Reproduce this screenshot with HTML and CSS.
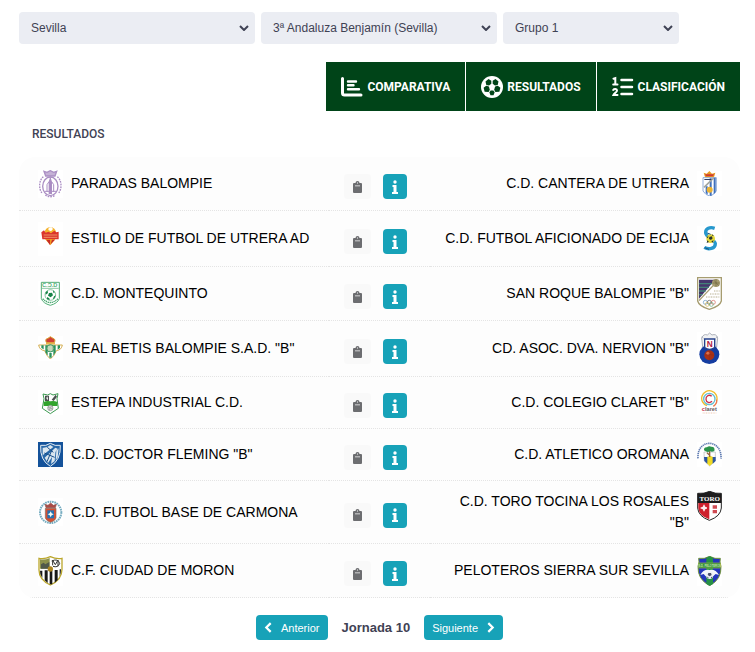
FILE: index.html
```html
<!DOCTYPE html>
<html lang="es">
<head>
<meta charset="utf-8">
<meta name="viewport" content="width=device-width, initial-scale=1">
<title>Resultados</title>
<link rel="stylesheet" href="styles.css">
</head>
<body>
<svg class="defs" aria-hidden="true">
  <symbol id="chevron" viewBox="0 0 10 6"><path d="M1 1l4 4 4-4" fill="none" stroke="currentColor" stroke-width="2"/></symbol>
  <symbol id="clip" viewBox="0 0 9 12"><path fill="currentColor" fill-rule="evenodd" d="M1 2h1.500a2 2 0 0 1 4 0H8a1 1 0 0 1 1 1v8a1 1 0 0 1-1 1H1a1 1 0 0 1-1-1V3a1 1 0 0 1 1-1zM4 1.500v1h1v-1zM2 4.500v.8h5v-.8z"/></symbol>
  <symbol id="info" viewBox="0 0 6 14"><circle cx="3" cy="2" r="1.700" fill="currentColor"/><path fill="currentColor" d="M.5 5h4v7H6v2H0v-2h1.500V7h-1z"/></symbol>
</svg>

<form class="filters">
  <div class="field"><select aria-label="Provincia"><option>Sevilla</option></select><svg><use href="#chevron"/></svg></div>
  <div class="field"><select aria-label="Competición"><option>3ª Andaluza Benjamín (Sevilla)</option></select><svg><use href="#chevron"/></svg></div>
  <div class="field"><select aria-label="Grupo"><option>Grupo 1</option></select><svg><use href="#chevron"/></svg></div>
</form>

<nav class="tabs">
  <a href="#comparativa">
    <svg viewBox="0 0 22 20" fill="none" stroke="#fff" stroke-linecap="round"><path stroke-width="3" d="M1.500 1.500V16a2 2 0 0 0 2 2H20"/><path stroke-width="2.400" d="M7 4.500h8M7 8.300h5.500M7 12.300h11"/></svg>
    Comparativa</a>
  <a href="#resultados">
    <svg viewBox="0 0 22 22"><circle cx="11" cy="11" r="11" fill="#fff"/><g fill="#004418"><path d="M10.300 4.800L7.500 3 4.500 5.500l.8 3.500 2.700.6 2.300-1.800z"/><path d="M11.700 4.800L14.500 3l3 2.500-.8 3.500-2.700.6-2.300-1.800z"/><path d="M5.200 9.800L2.600 11.700l1 4 4 .3 1.200-2.200-.9-3.300z"/><path d="M16.800 9.800l2.600 1.900-1 4-4 .3-1.200-2.200.9-3.300z"/><path d="M8.300 16.300l1.400-1.800h2.600l1.400 1.800-1.200 3H9.500z"/></g></svg>
    Resultados</a>
  <a href="#clasificacion">
    <svg viewBox="0 0 22 20" fill="none" stroke="#fff" stroke-linecap="round"><path stroke-width="2.500" d="M9.500 3H20M9.500 10H20M9.500 17H20"/><path stroke-width="2" d="M1.500 1.800L3.300 1.200V7M1.200 7.500h4.300M1.200 13c1-1.500 3.800-1.200 3.800.5 0 1.700-2.500 2.500-3.500 4.500h4"/></svg>
    Clasificación</a>
</nav>

<main>
<h1>Resultados</h1>
<table class="matches">
<colgroup><col class="side"><col class="mid"><col class="side"></colgroup>
<tbody>
<tr>
  <td><div class="team"><svg class="crest h28" viewBox="0 0 75 84"><g fill="none" stroke="#ab8fc4" stroke-width="4"><path fill="#c5b1d6" d="M18 4l9 3 10-5 10 5 9-3-5 14H23z"/><ellipse cx="37" cy="49" rx="23" ry="28"/><path stroke-dasharray="5 3" d="M16 20C2 32 2 57 12 69M58 20c14 12 14 37 4 49M22 75c8 7 22 7 30 0"/><path fill="#a98bc2" d="M34 36l3-10 3 10v34h-6z"/><path stroke-width="3" d="M27 66V44l6-9M47 66V44l-6-9M20 64h34"/></g></svg><span>PARADAS BALOMPIE</span></div></td>
  <td class="actions"><button class="note" aria-label="Acta"><svg><use href="#clip"/></svg></button><button class="info" aria-label="Información"><svg><use href="#info"/></svg></button></td>
  <td><div class="team away"><span>C.D. CANTERA DE UTRERA</span><svg class="crest" viewBox="0 0 75 75"><path fill="#e99a25" d="M20 5l9 3 8-8 8 8 10-3-4 14H24z"/><path fill="#cf3b31" d="M24 10h27l-3 6H27z"/><path d="M18 20h40v40q-8 13-20 15-12-2-20-15z" fill="#fff" stroke="#5a86c9" stroke-width="2"/><path fill="#3f70bd" d="M26 46h6v25l-6-5zM38 22h6v52h-6zM50 20h6v44l-6 6z"/><path stroke="#a3a6a1" stroke-width="5" d="M21 49l29-28"/><circle cx="38" cy="56" r="9" fill="#eab334"/><path fill="#303c64" d="M22 24h21v3H22z"/></svg></div></td>
</tr>
<tr class="tall">
  <td><div class="team"><svg class="crest h34" viewBox="0 0 75 102"><circle cx="37" cy="32" r="17" fill="#f5b32d"/><path fill="#fff" d="M32 17l8-2 5 6-6 7-8-4z"/><path fill="#db352b" d="M10 31l8-6 5 7 9-3 7 5 10-8 6 5 7-2v23H13z"/><path fill="#f39b22" d="M21 51h31L37 70z"/><path fill="#c62d27" d="M25 53l11 16V53zM42 53l-4 14 13-14z"/><path stroke="#f8c184" stroke-width="2" d="M17 39h41M17 46h41"/></svg><span>ESTILO DE FUTBOL DE UTRERA AD</span></div></td>
  <td class="actions"><button class="note" aria-label="Acta"><svg><use href="#clip"/></svg></button><button class="info" aria-label="Información"><svg><use href="#info"/></svg></button></td>
  <td><div class="team away"><span>C.D. FUTBOL AFICIONADO DE ECIJA</span><svg class="crest" viewBox="0 0 75 75"><path fill="none" stroke="#2798cd" stroke-width="10" d="M53 7C39 2 25 7 26 21c2 14 28 18 29 32 0 15-20 19-33 11"/><circle cx="41" cy="38" r="13" fill="#e5d83b"/><path fill="#26332e" d="M37 33l7-2 3 6-5 5-6-3zM29 34l5-4-1 7zM50 43l-3 7-4-4zM31 43l5 5-7 3zM44 25l6 3-3 3z"/><path stroke="#1d537e" stroke-width="3" d="M31 21l10 4M23 65l13 5"/></svg></div></td>
</tr>
<tr>
  <td><div class="team"><svg class="crest" viewBox="0 0 75 75"><path d="M10 4h54v49q-5 14-27 20-22-6-27-20z" fill="#fff" stroke="#51ae76" stroke-width="3"/><text x="12" y="19" class="green-letters">C.Ɔ.D</text><path stroke="#51ae76" stroke-width="2" d="M12 22h50"/><circle cx="37" cy="42" r="16" fill="#fff" stroke="#51ae76" stroke-width="2"/><path fill="#178448" d="M33 36l9-1 3 8-7 6-8-5zM23 33l6-4 1 7-7 5zM45 28l6 6-5 2zM48 46l5-3-3 9-6 3zM27 48l7 4 1 6-8-4z"/><path fill="none" stroke="#43a56b" stroke-width="4" stroke-dasharray="4 2" d="M14 53q23 23 46 0"/></svg><span>C.D. MONTEQUINTO</span></div></td>
  <td class="actions"><button class="note" aria-label="Acta"><svg><use href="#clip"/></svg></button><button class="info" aria-label="Información"><svg><use href="#info"/></svg></button></td>
  <td><div class="team away"><span>SAN ROQUE BALOMPIE "B"</span><svg class="crest h33" viewBox="0 0 75 99"><path d="M2 2h71v70q-4 16-36 25Q6 88 2 72z" fill="#fff" stroke="#a69c70" stroke-width="4"/><path fill="#46376d" d="M6 8h48L6 65z"/><path stroke="#438177" stroke-width="4" d="M6 20h40M6 31h30M6 42h20M6 53h10"/><path stroke="#a69c70" stroke-width="4" d="M6 71L52 22"/><circle cx="57" cy="18" r="12" fill="#a69c70"/><path fill="none" stroke="#726944" stroke-width="2" d="M47 18h20M57 7v21M50 9l15 17"/><path stroke="#b6ae8d" stroke-width="3" stroke-dasharray="3 2" d="M51 42h17M39 51h29M27 60h41"/><g fill="none" stroke-width="2"><circle cx="25" cy="76" r="6" stroke="#5c92bd"/><circle cx="37" cy="76" r="6" stroke="#555"/><circle cx="49" cy="76" r="6" stroke="#d66456"/><circle cx="31" cy="82" r="6" stroke="#d9b84e"/><circle cx="43" cy="82" r="6" stroke="#62a777"/></g></svg></div></td>
</tr>
<tr class="tall">
  <td><div class="team"><svg class="crest" viewBox="0 0 75 75"><path fill="#cf4035" stroke="#dba332" stroke-width="3" d="M26 21q-7-12 4-14l7-5 8 5q10 3 3 14z"/><path fill="#e4b44b" d="M24 19h27v6H24z"/><path d="M2 27h71q-2 15-18 17Q50 59 37 69 25 59 20 44 4 42 2 27z" fill="#fff" stroke="#d4ae52" stroke-width="3"/><path fill="#28915a" d="M10 28h7v12l-7-4zM22 28h7v31l-7-11zM46 28h7v20l-7 11zM59 28h7v8l-7 5zM34 51h7v14h-7z"/><circle cx="37" cy="37" r="11" fill="#a9c49c" stroke="#3c9b67" stroke-width="3"/><path stroke="#dfeedd" stroke-width="3" d="M33 30v14M39 29v16"/></svg><span>REAL BETIS BALOMPIE S.A.D. "B"</span></div></td>
  <td class="actions"><button class="note" aria-label="Acta"><svg><use href="#clip"/></svg></button><button class="info" aria-label="Información"><svg><use href="#info"/></svg></button></td>
  <td><div class="team away"><span>CD. ASOC. DVA. NERVION "B"</span><svg class="crest h34" viewBox="0 0 75 102"><path d="M14 18q6-14 17-9l7-6 7 6q13-5 17 9l-3 27H17z" fill="#f1f2f4" stroke="#aeb2bb" stroke-width="3"/><path fill="none" stroke="#a2a8b5" stroke-width="3" stroke-dasharray="5 3" d="M14 15q12 3 9 25M61 15q-10 3-8 25"/><ellipse cx="37" cy="67" rx="30" ry="29" fill="#153da1"/><path d="M23 21h30v26q-15 10-30 0z" fill="#fff" stroke="#26428c" stroke-width="4"/><text x="38" y="45" text-anchor="middle" class="n-letter">N</text><circle cx="37" cy="70" r="15" fill="#a83217"/><circle cx="33" cy="64" r="5" fill="#db7450"/><path fill="none" stroke="#8a2816" stroke-width="1" d="M23 70q14-7 28 0M37 55v29"/></svg></div></td>
</tr>
<tr class="compact">
  <td><div class="team"><svg class="crest" viewBox="0 0 75 75"><path d="M15 12l14 3 8-4 8 4 15-4-3 15 4 29-24 16-24-16 5-29z" fill="#fff" stroke="#3c9a51" stroke-width="3"/><path fill="#4b5050" d="M21 17h12v16H21zM41 29l12-15 4 6-10 13z"/><path fill="#fff" d="M25 24l3-5 2 7-2 5z"/><path fill="#32a52d" d="M17 36q9-5 20-2 11-3 21 2v12H17z"/><circle cx="37" cy="54" r="8" fill="#d3d8d5" stroke="#8a908c" stroke-width="2"/><path stroke="#999" stroke-width="2" d="M30 51l14 6M41 47l-8 14"/></svg><span>ESTEPA INDUSTRIAL C.D.</span></div></td>
  <td class="actions"><button class="note" aria-label="Acta"><svg><use href="#clip"/></svg></button><button class="info" aria-label="Información"><svg><use href="#info"/></svg></button></td>
  <td><div class="team away"><span>C.D. COLEGIO CLARET "B"</span><svg class="crest" viewBox="0 0 75 75"><g fill="none" stroke-width="4"><path stroke="#f1bd2c" d="M30 47A23 23 0 1 1 59 32"/><path stroke="#ed7748" d="M59 29q2 12-10 20"/><circle cx="37" cy="27" r="17" stroke="#63bed2"/><path stroke="#cc304b" d="M44 19c-8-8-18 0-17 9 1 10 11 13 18 6"/></g><text x="37" y="63" text-anchor="middle" class="claret"><tspan fill="#c72b45">c</tspan>laret</text><path stroke="#e5ad8e" stroke-width="2" stroke-dasharray="3 2" d="M17 69h41"/></svg></div></td>
</tr>
<tr class="compact">
  <td><div class="team"><svg class="crest" viewBox="0 0 75 75"><path fill="#14529a" d="M0 0h75v75H0z"/><path d="M8 10q16 3 29-6 14 9 30 6Q69 55 37 73 5 55 8 10z" fill="#2767a8" stroke="#e6edf3" stroke-width="3"/><path fill="#dbe6ef" d="M14 17q14 1 23-8l9 6-32 25zM20 47l32-30 7 3-29 43zM39 66l6-37 8-6-3 34zM55 27l7-8-3 27-6 8z"/><path stroke="#164d89" stroke-width="3" d="M19 33l31 13M28 16l18 15M27 59l15-36"/></svg><span>C.D. DOCTOR FLEMING "B"</span></div></td>
  <td class="actions"><button class="note" aria-label="Acta"><svg><use href="#clip"/></svg></button><button class="info" aria-label="Información"><svg><use href="#info"/></svg></button></td>
  <td><div class="team away"><span>C.D. ATLETICO OROMANA</span><svg class="crest" viewBox="0 0 75 75"><path fill="none" stroke="#5d79b0" stroke-width="5" stroke-dasharray="4 2" d="M3 49C1 21 17 4 37 4s37 18 35 46"/><path fill="#fff" stroke="#b3b8b8" stroke-width="2" d="M21 30h34v27L38 72 22 57z"/><path fill="#f0da26" d="M30 45l9-4 9 4v18L38 72l-8-8z"/><path fill="#2c55a0" d="M21 45h10v20l-9-8zM47 45h9v12l-9 8z"/><path stroke="#92643c" stroke-width="4" d="M38 45V27M38 40l-8-8"/><path fill="#2c944b" d="M21 25q-1-10 9-9 5-5 13-2 12 0 9 13-8 4-13 0-6 7-18-2z"/></svg></div></td>
</tr>
<tr class="double">
  <td><div class="team"><svg class="crest h28" viewBox="0 0 75 84"><circle cx="38" cy="43" r="32" fill="none" stroke="#77adc1" stroke-width="6" stroke-dasharray="5 2"/><circle cx="38" cy="43" r="26" fill="#fff"/><path fill="#ad4b46" stroke="#8c5650" stroke-width="2" d="M24 29l-3-10 9 3 8-7 8 7 9-3-3 10z"/><path d="M22 31h32v29q-3 9-16 13-13-4-16-13z" fill="#d65032" stroke="#806e62" stroke-width="2"/><path fill="#2672b1" d="M28 37h20v24H28z"/><path fill="#f7f8ef" d="M38 40l3 6 6 3-6 3-3 6-3-6-6-3 6-3z"/></svg><span>C.D. FUTBOL BASE DE CARMONA</span></div></td>
  <td class="actions"><button class="note" aria-label="Acta"><svg><use href="#clip"/></svg></button><button class="info" aria-label="Información"><svg><use href="#info"/></svg></button></td>
  <td><div class="team away top"><span>C.D. TORO TOCINA LOS ROSALES "B"</span><svg class="crest h30" viewBox="0 0 75 90"><path fill="#fff" stroke="#252525" stroke-width="3" d="M2 7q20 2 36-6 16 8 35 6v44q-2 25-36 37Q4 76 2 51z"/><path fill="#ce202d" d="M4 35h33v50Q6 74 4 51z"/><path fill="#1d1c1d" d="M2 7q20 2 36-6 16 8 35 6v29H2z"/><text x="38" y="30" text-anchor="middle" class="toro">TORO</text><path stroke="#fff" stroke-width="4" d="M11 51h19M21 41v20"/><circle cx="21" cy="51" r="5" fill="none" stroke="#fff" stroke-width="2"/><path fill="#cf4b53" d="M47 43h13v10H47zM47 57h13v10H47z"/></svg></div></td>
</tr>
<tr>
  <td><div class="team"><svg class="crest h30" viewBox="0 0 75 90"><path d="M3 7q17 3 34-5 18 8 35 5v31q1 33-35 49Q1 71 3 38z" fill="#fff" stroke="#bba72d" stroke-width="4"/><path fill="#8c914c" d="M6 10q16 2 29-4v32H6z"/><path fill="#50594b" d="M9 25l8-5 5 5 12-7v20H9z"/><path fill="none" stroke="#333" stroke-width="3" d="M44 28V13l8 13 8-14v19M41 15q20-9 24 8-6 13-20 8"/><path fill="#181818" d="M6 44h7v22l-6-12zM20 43h9v38l-9-8zM35 43h8v42h-8zM50 42h9v30l-9 8zM65 40h4q0 14-4 21z"/><circle cx="37" cy="39" r="8" fill="#ad8623"/></svg><span>C.F. CIUDAD DE MORON</span></div></td>
  <td class="actions"><button class="note" aria-label="Acta"><svg><use href="#clip"/></svg></button><button class="info" aria-label="Información"><svg><use href="#info"/></svg></button></td>
  <td><div class="team away"><span>PELOTEROS SIERRA SUR SEVILLA</span><svg class="crest h30" viewBox="0 0 75 90"><path d="M5 7q17 3 33-6 16 9 32 6-3 10 2 24 2 39-34 58Q1 70 3 31 8 17 5 7z" fill="#2436bd" stroke="#73953b" stroke-width="3"/><path fill="#269145" d="M28 5l10-4 10 4v79l-10 5-10-5z"/><path fill="#2b9145" stroke="#a5b741" stroke-width="2" d="M5 21h65v15H5z"/><text x="38" y="33" text-anchor="middle" class="pelo">S.D. PELOTEROS</text><path fill="#f4f6fb" d="M10 57q9-18 28-15 18-3 28 15l-10-3-7 6-11-3-12 4-6-7z"/><circle cx="38" cy="58" r="11" fill="#eef0f6"/><path fill="#4e526e" d="M34 51h8l2 6-6 4-6-4zM29 62l5 1v5zM47 62l-5 1v5z"/></svg></div></td>
</tr>
</tbody>
</table>

<div class="pager">
  <button><svg class="arrow" viewBox="0 0 8 10"><path d="M6 1L2 5l4 4" fill="none" stroke="#fff" stroke-width="2"/></svg>Anterior</button>
  <strong>Jornada 10</strong>
  <button>Siguiente<svg class="arrow" viewBox="0 0 8 10"><path d="M2 1l4 4-4 4" fill="none" stroke="#fff" stroke-width="2"/></svg></button>
</div>
</main>
</body>
</html>
```
FILE: styles.css
```css
* { box-sizing: border-box; }
body {
  margin: 0;
  padding: 12px 15px 12px 19px;
  background: #fff;
  color: #3f4254;
  font: 12px/18px "Liberation Sans", Arial, sans-serif;
}
.defs { position: absolute; width: 0; height: 0; }
button, select { font: inherit; border: 0; margin: 0; }

.filters {
  display: grid;
  grid-template-columns: 236fr 236fr 176fr 55fr;
  gap: 6px;
}
.field { position: relative; }
.field select {
  appearance: none;
  width: 100%;
  height: 32px;
  padding: 0 24px 0 12px;
  border-radius: 4px;
  background: #ebedf3;
  color: #3f4254;
}
.field svg {
  position: absolute;
  right: 6px;
  top: 13px;
  width: 10px;
  height: 6px;
  pointer-events: none;
}

.tabs {
  display: flex;
  justify-content: flex-end;
  gap: 1px;
  margin-top: 18px;
}
.tabs a {
  display: flex;
  align-items: center;
  gap: 4px;
  height: 49px;
  padding: 0 15px;
  background: #004418;
  color: #fff;
  font: bold 12px/20px Roboto, "Liberation Sans", sans-serif;
  text-decoration: none;
  text-transform: uppercase;
}
.tabs svg { width: 22px; height: 22px; }

h1 {
  margin: 11px 0 0;
  padding-left: 13px;
  font: 500 12px/24px Roboto, "Liberation Sans", sans-serif;
  text-transform: uppercase;
}

.matches {
  width: 100%;
  margin-top: 11px;
  table-layout: fixed;
  border-spacing: 0;
  border-radius: 16px;
  overflow: hidden;
  background: #fdfdfd;
  color: #000;
  font-size: 14px;
  line-height: 21px;
}
.side { width: 43%; }
.mid { width: 14%; }
.matches tr { height: 54px; }
.matches .tall { height: 56px; }
.matches .compact { height: 52px; }
.matches .double { height: 63px; }
.matches td {
  padding: 0 18px 0 8px;
  border-bottom: 1px dotted #e4e4e4;
  vertical-align: middle;
}
.matches td:first-child { padding: 0 8px 0 19px; }
.team { display: flex; align-items: center; gap: 8px; }
.away { justify-content: flex-end; text-align: right; }
.away span { max-width: 250px; }
.top { align-items: flex-start; }
.crest { flex: none; width: 25px; height: 25px; background: #fff; }
.h28 { height: 28px; }
.h30 { height: 30px; }
.h33 { height: 33px; }
.h34 { height: 34px; }
.green-letters { font: bold 17px "Liberation Sans", sans-serif; fill: #51ae76; }
.n-letter { font: bold 25px "Liberation Sans", sans-serif; fill: #b52042; }
.claret { font: bold 17px "Liberation Sans", sans-serif; fill: #64585c; }
.toro { font: bold 21px "Liberation Serif", serif; fill: #fff; }
.pelo { font: bold 8px "Liberation Sans", sans-serif; fill: #d4e5a4; }

.matches .actions { padding: 6px 8px 0 0; text-align: center; font-size: 0; }
.actions button {
  display: inline-flex;
  align-items: center;
  justify-content: center;
  width: 24px;
  height: 25px;
  padding: 0;
  border-radius: 4px;
  vertical-align: middle;
}
.actions .note { width: 27px; margin-right: 12px; background: #f9f9f9; color: #6c6d70; }
.note svg { width: 9px; height: 12px; }
.actions .info { background: #17a2b8; color: #fff; }
.info svg { width: 6px; height: 14px; }

.pager {
  display: flex;
  justify-content: center;
  align-items: center;
  gap: 14px;
  margin-top: 17px;
  font-size: 13px;
}
.pager button {
  display: flex;
  align-items: center;
  gap: 8px;
  height: 25px;
  padding: 0 8px;
  border-radius: 4px;
  background: #17a2b8;
  color: #fff;
  font-size: 11px;
}
.arrow { width: 9px; height: 11px; }
```
